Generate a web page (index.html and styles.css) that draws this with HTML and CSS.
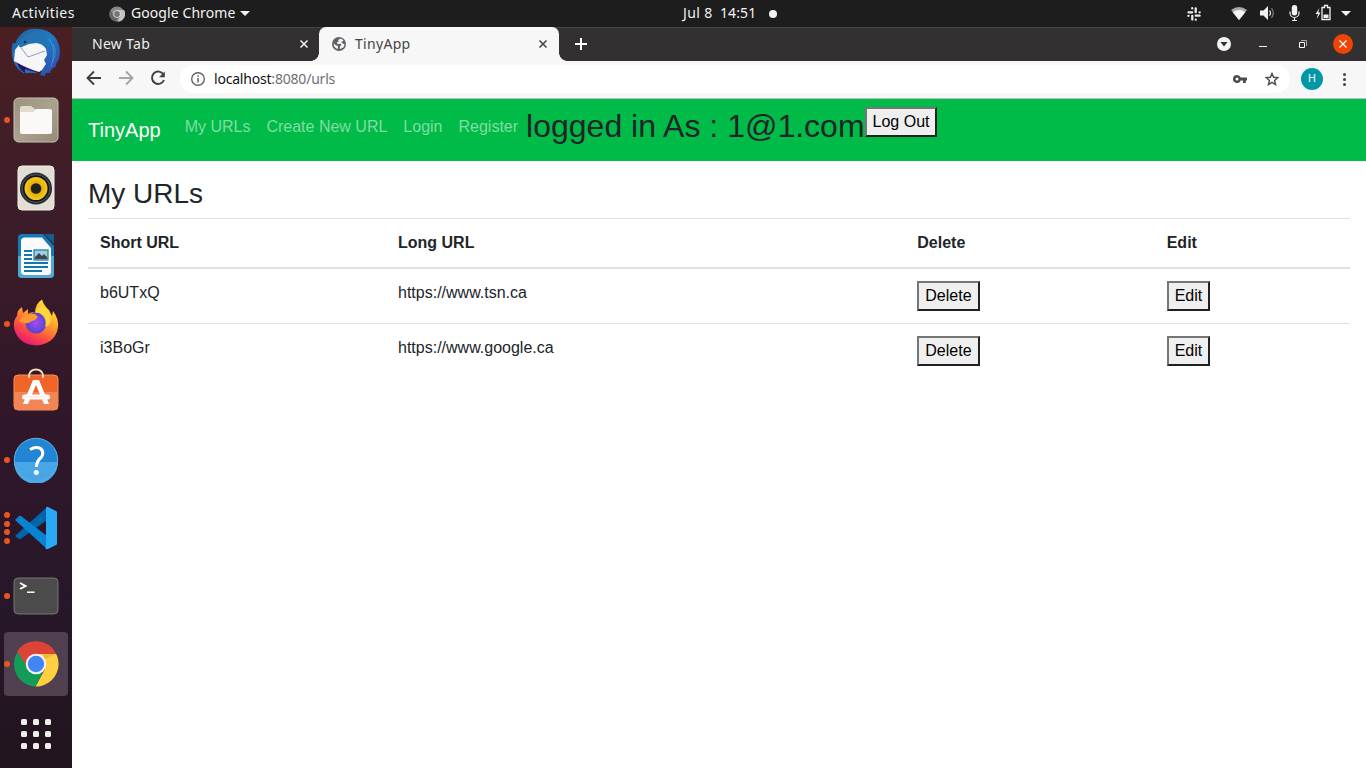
FILE: index.html
```html
<!DOCTYPE html>
<html lang="en">
<head>
<meta charset="utf-8">
<title>TinyApp</title>
<link rel="stylesheet" href="styles.css">
</head>
<body>
<div class="desktop">
  <header class="topbar">
    <div class="top-left">
      <span class="activities">Activities</span>
      <svg class="app-glyph" width="16" height="16" viewBox="0 0 16 16"><circle cx="8" cy="8" r="7.6" fill="#8a8a8a"/><path d="M8 4h7A7.6 7.6 0 0 1 8.500 15.600L11.500 10z" fill="#c4c4c4"/><path d="M1.500 4A7.600 7.600 0 0 0 7 15.500L9 11 5 10z" fill="#666"/><circle cx="8" cy="8" r="3.8" fill="#ddd"/><circle cx="8" cy="8" r="2.900" fill="#777"/></svg>
      <span class="app-name">Google Chrome</span>
      <i class="caret"></i>
    </div>
    <div class="clock"><span class="date">Jul 8</span><span class="time">14:51</span><i class="dot"></i></div>
    <svg class="slack" width="14" height="14" viewBox="0 0 14 14"><path d="M5.200 1.200v.2M8.700 1.400v3.800M12.600 5.300h.1M8.800 8.700h3.800M8.800 12.600v.1M5.300 8.800v3.800M1.400 8.800h.1M1.500 5.300h3.700" stroke="#eaeaea" stroke-width="2.300" stroke-linecap="round" fill="none"/></svg>
    <svg class="tray" width="170" height="27" viewBox="1190 0 170 27">
      <path d="M1231 10Q1239 4 1247 10L1239 20z" fill="#aaa"/><path d="M1232.800 12.200Q1239 8 1245.200 12.200L1239 20z" fill="#f5f5f5"/>
      <path d="M1260 10.500h3.500l4.500-4.500v14l-4.500-4.500h-3.500z" fill="#f2f2f2"/><path d="M1269.500 10.500q2 2.500 0 5" fill="none" stroke="#ddd" stroke-width="1.300"/><path d="M1271.500 8q3.500 5 0 10" fill="none" stroke="#777" stroke-width="1.300"/>
      <rect x="1291.800" y="5" width="5.400" height="10.500" rx="2.700" fill="#f2f2f2"/><path d="M1290 11.500v1.500a4.500 4.500 0 0 0 9 0v-1.500M1294.500 17.500v3M1292 20.500h5" fill="none" stroke="#eee" stroke-width="1.200"/>
      <path d="M1319.500 8l-4 6h2.500l-1.200 5 3.700-6.500h-2.300z" fill="#f2f2f2"/><path d="M1322 7.500h2.500v-2h3v2h2.500v12h-8z" fill="none" stroke="#f2f2f2" stroke-width="1.300"/><path d="M1323.500 14.500h5v3.500h-5z" fill="#f2f2f2"/>
      <path d="M1341 11h10l-5 5z" fill="#f2f2f2"/>
    </svg>
  </header>

  <div class="workspace">
    <nav class="dock">
      <div class="app"><svg width="50" height="50" viewBox="0 0 50 50"><defs><linearGradient id="tb" x1="0" y1="0" x2="1" y2="1"><stop offset="0" stop-color="#205f9e"/><stop offset=".5" stop-color="#1d7cc4"/><stop offset="1" stop-color="#363fa6"/></linearGradient></defs><path d="M2 15L4 17Q8 5 19 2Q36 0 44 10Q51 20 48 32L45 37 45 39 40 43 39 46 35 46 34 49 29 48 31 43 25 46 12 46Q2 39 1 28Q0 21 2 15z" fill="url(#tb)"/><path d="M5 33Q7 42 14 46L14 42 28 46 35 38z" fill="#24165f"/><path d="M3 34L4 23 8 18 26 16Q32 17 35 22L36 28 33 33 35 37 31 43 28 45Q17 42 3 34z" fill="#f6f6f8"/><path d="M8 18l9 12 17-6" fill="none" stroke="#9a9da5" stroke-width="1"/><path d="M8 20Q12 5 26 4Q37 6 37 23Q31 14 20 16L11 20z" fill="#2573b2"/><path d="M38 12q8 10 2 28M42 17q5 8-1 19" stroke="#58b3e5" stroke-width="1" fill="none" opacity=".5"/><circle cx="14" cy="15" r="1.300" fill="#182437"/></svg></div>
      <div class="app run1"><svg width="46" height="46" viewBox="0 0 46 46"><defs><linearGradient id="fi" x1="0" y1="0" x2="1" y2="1"><stop offset="0" stop-color="#9b937f"/><stop offset=".5" stop-color="#aaa28f"/><stop offset="1" stop-color="#938b78"/></linearGradient></defs><rect x="1" y="1" width="44" height="44" rx="4.500" fill="url(#fi)" stroke="#c7c1b2"/><path d="M7 11q0-2 2-2h9l4 3v9H7z" fill="#dfdbcf"/><path d="M7 15h13l3-3h14q2 0 2 2v21q0 2-2 2H9q-2 0-2-2z" fill="#faf9f7"/></svg></div>
      <div class="app"><svg width="38" height="46" viewBox="0 0 38 46"><defs><radialGradient id="sp"><stop offset=".3" stop-color="#dca700"/><stop offset="1" stop-color="#f5c71e"/></radialGradient></defs><rect x="1" y="1" width="36" height="44" rx="4" fill="#e3ded3" stroke="#f4f0e6"/><circle cx="19" cy="23.500" r="16" fill="#2c2f35"/><circle cx="19" cy="23.500" r="13.800" fill="#10131a" stroke="#626874" stroke-width=".7"/><circle cx="19" cy="23.500" r="11.500" fill="url(#sp)"/><circle cx="19" cy="23.500" r="5.300" fill="#222"/></svg></div>
      <div class="app"><svg width="38" height="46" viewBox="0 0 38 46"><path d="M5 1h21l11 12v28q0 4-4 4H5q-4 0-4-4V5q0-4 4-4z" fill="#167bb4"/><path d="M1 23h36v18q0 4-4 4H5q-4 0-4-4z" fill="#50a8d4"/><path d="M8 4.500h17L34 15v24q0 3-3 3H8q-4 0-4-4V8q0-3.500 4-3.500z" fill="#fafafa"/><path d="M27 1h10v10z" fill="#0d5e91"/><path d="M7 18h8M7 22h8M7 26h8M7 30h24M7 34h24M7 38h18" stroke="#1475ae" stroke-width="1.900"/><rect x="17" y="17" width="14" height="10" fill="#9bd1ec" stroke="#1475ae" stroke-width="1.200"/><path d="M18 26v-2l4-4 3 3 2-2 3 3v2z" fill="#444"/><path d="M27 18h3v3z" fill="#efc52a"/></svg></div>
      <div class="app run1 firefox"><svg width="46" height="47" viewBox="0 0 46 47"><defs><linearGradient id="ff" x1=".8" y1="0" x2=".25" y2="1"><stop offset="0" stop-color="#fff044"/><stop offset=".35" stop-color="#ffad2b"/><stop offset=".7" stop-color="#ff4f3e"/><stop offset="1" stop-color="#e20f80"/></linearGradient><radialGradient id="fg"><stop offset="0" stop-color="#a84bf4"/><stop offset="1" stop-color="#5146cb"/></radialGradient></defs><path d="M4 17Q4 11 9 8l1 6 5-4 0 5Q19 12 22 14Q22 5 29 .5Q31 7 36 11L39 17 40 12Q46 20 45 28Q43 44 24 46.500Q5 46 1 29Q0 21 4 17z" fill="url(#ff)"/><circle cx="23" cy="24" r="10.500" fill="url(#fg)"/><path d="M6 22Q11 14 22 15L25 18Q23 21 19 22Q15 25 11 24z" fill="#ff982e"/><path d="M22 14Q26 12 30 17Q34 22 32 28Q38 26 38 19Q36 12 29 7Q24 9 22 14z" fill="#ffd93b" opacity=".85"/></svg></div>
      <div class="app store"><svg width="46" height="44" viewBox="0 0 46 44"><rect x="1" y="8" width="44" height="35" rx="4" fill="#ef6528" stroke="#fa9158"/><path d="M1 25h44v14q0 4-4 4H5q-4 0-4-4z" fill="#f28555"/><path d="M16 11V8a7.200 7.200 0 0 1 14 0v3" fill="none" stroke="#f6dfbd" stroke-width="1.800"/><path d="M20 13h6l10 24h-5l-8-19-8 19h-5z" fill="#fff"/><rect x="9" y="27.500" width="28" height="5" rx="2.500" fill="#fff"/><path d="M13 30h20" stroke="#f3d2c5" stroke-width=".7"/></svg></div>
      <div class="app run1 help"><svg width="46" height="46" viewBox="0 0 46 46"><circle cx="23" cy="23" r="22" fill="#2286d4"/><path d="M1 25a22 22 0 0 0 44 0z" fill="#48a6e6"/><circle cx="23" cy="23" r="21.700" fill="none" stroke="#5dafe6"/><path d="M17 12.500Q23 9 27.500 11.500Q31.500 15 28.500 20Q23.500 24 23.500 30" fill="none" stroke="#fff" stroke-width="3"/><circle cx="23.300" cy="35.500" r="2.500" fill="#fff"/></svg></div>
      <div class="app run4"><svg width="44" height="44" viewBox="0 0 44 44"><path d="M1 30l4 3q1 .5 2-.2L33 14V1z" fill="#0065a9"/><path d="M1 14l4-4q1-.6 2 0l26 20v13z" fill="#0983d1"/><path d="M32 1.500q1-1 2-.5l8 4q1 .5 1 1.500v31q0 1-1 1.500l-8 4q-2 .5-3-1l1-1z" fill="#29a8f4"/></svg></div>
      <div class="app run1"><svg width="46" height="38" viewBox="0 0 46 38"><rect x="1" y="1" width="44" height="36" rx="4" fill="#4b4b4b" stroke="#747474"/><path d="M7 6l5.500 3-5.500 3" fill="none" stroke="#fff" stroke-width="1.900"/><path d="M14 15.200h7.500" stroke="#fff" stroke-width="1.500"/></svg></div>
      <div class="app run1 current"><svg width="46" height="46" viewBox="0 0 46 46"><path d="M23 23H12L4 10.500A22.500 22.500 0 0 1 43.200 13L35 18z" fill="#dc4437"/><path d="M23 13h20.200A22.500 22.500 0 0 1 22.500 45.500L32 28z" fill="#ffce41"/><path d="M4.500 11A22.500 22.500 0 0 0 22.500 45.500L30 31 23 30 13 24z" fill="#119d58"/><path d="M32 18l-2-5h13.200z" fill="#c69a20" opacity=".35"/><circle cx="23" cy="23" r="10.300" fill="#f3f3f3"/><circle cx="23" cy="23" r="8.200" fill="#4285f4"/></svg></div>
      <div class="grid"><i></i><i></i><i></i><i></i><i></i><i></i><i></i><i></i><i></i></div>
    </nav>

    <section class="browser">
      <div class="tabs">
        <div class="tab back"><span>New Tab</span><svg width="10" height="10" viewBox="0 0 10 10"><path d="M1.500 1.500l7 7m0-7l-7 7" stroke="#eee" stroke-width="1.600"/></svg></div>
        <div class="tab active"><svg width="14" height="14" viewBox="0 0 14 14"><circle cx="7" cy="7" r="7" fill="#5f6368"/><path d="M8.500 1.500L6.200 3l.6 1.500-1.800.8.400 1.700 3.100-.2 1 1.300-1.500 1.200-.2 2.700q4.500-.8 4.700-4.700l-1.800-.8L9.200 5l2.300-1.300Q10.500 2 8.500 1.500zM1.700 6.500l2.600 2 1.700.500-.3 2.900Q1.800 11 1.700 6.500z" fill="#f7f7f7"/></svg><span>TinyApp</span><svg width="10" height="10" viewBox="0 0 10 10"><path d="M1.500 1.500l7 7m0-7l-7 7" stroke="#454545" stroke-width="1.600"/></svg></div>
        <svg class="plus" width="12" height="12" viewBox="0 0 12 12"><path d="M6 0v12M0 6h12" stroke="#fff" stroke-width="2"/></svg>
        <svg class="controls" width="150" height="34" viewBox="1210 27 150 34"><circle cx="1224" cy="44" r="7" fill="#f4f4f4"/><path d="M1220.500 42h7l-3.500 4.500z" fill="#323031"/><path d="M1259 46.500h8" stroke="#f4f4f4"/><path d="M1299.500 42.500h5v5h-5z" fill="none" stroke="#fff"/><path d="M1301 40.500h5.500v5.500" fill="none" stroke="#aaa"/><circle cx="1343" cy="44" r="10" fill="#ee4507"/><path d="M1339.500 40.500l7 7m0-7l-7 7" stroke="#fff" stroke-width="1.300"/></svg>
      </div>
      <div class="toolbar">
        <svg class="navs" width="86" height="20" viewBox="84 70 86 20" fill="none" stroke="#3c4043" stroke-width="1.900"><path d="M101 79H88M94 72.500L87.500 79l6.500 6.500"/><path d="M119 79h13M126 72.500l6.500 6.500-6.500 6.500" stroke="#a5a5a5"/><path d="M163.500 75.500a6.200 6.200 0 1 0 .5 5.500"/><path d="M164.800 72.500v5.800h-5.800z" fill="#3c4043" stroke="none"/></svg>
        <div class="address">
          <svg width="14" height="14" viewBox="0 0 14 14"><circle cx="7" cy="7" r="6.300" fill="none" stroke="#5f6368" stroke-width="1.400"/><path d="M7 6v4.500M7 3.200v1.500" stroke="#5f6368" stroke-width="1.500"/></svg>
          <span class="url">localhost<em>:8080/urls</em></span>
          <svg class="key" width="14" height="8" viewBox="0 0 14 8"><path fill-rule="evenodd" d="M4 0a4 4 0 0 1 3.700 2.600H14v2.800h-1.200V8H10V5.400H7.700A4 4 0 1 1 4 0zM4 2.500a1.500 1.500 0 1 0 0 3 1.500 1.500 0 0 0 0-3z" fill="#4b4b4b"/></svg>
          <svg width="14" height="14" viewBox="0 0 14 14"><path d="M7 1.400l1.600 3.900 4.200.4-3.200 2.800 1 4.100L7 10.400l-3.600 2.200 1-4.100L1.200 5.700l4.200-.4z" fill="none" stroke="#4b4b4b" stroke-width="1.400"/></svg>
        </div>
        <span class="avatar">H</span>
        <span class="more"><i></i><i></i><i></i></span>
      </div>
      <div class="page">
        <nav class="navbar">
          <a class="brand">TinyApp</a>
          <div class="nav"><a>My URLs</a><a>Create New URL</a><a>Login</a><a>Register</a><h2>logged in As : 1@1.com</h2><button>Log Out</button></div>
        </nav>
        <main>
          <h3>My URLs</h3>
          <table>
            <colgroup><col class="c1"><col class="c2"><col class="c3"><col></colgroup>
            <thead><tr><th>Short URL</th><th>Long URL</th><th>Delete</th><th>Edit</th></tr></thead>
            <tbody>
              <tr><td>b6UTxQ</td><td>https://www.tsn.ca</td><td><button>Delete</button></td><td><button>Edit</button></td></tr>
              <tr><td>i3BoGr</td><td>https://www.google.ca</td><td><button>Delete</button></td><td><button>Edit</button></td></tr>
            </tbody>
          </table>
        </main>
      </div>
    </section>
  </div>
</div>
</body>
</html>
```
FILE: styles.css
```css
* { box-sizing: border-box; }
body { margin: 0; font-family: "Noto Sans", "Open Sans", sans-serif; }
svg { display: block; flex: none; }
.desktop { width: 1366px; height: 768px; overflow: hidden; display: flex; flex-direction: column; }

.topbar { height: 27px; flex: none; background: #1d1d1d; color: #f2f2f2; display: grid; grid-template-columns: 683px 1fr 14px 159px; align-items: center; font-size: 14px; line-height: 27px; padding-right: 6px; }
.top-left { display: flex; align-items: center; padding-left: 12px; }
.activities { width: 97px; letter-spacing: .45px; }
.app-name { margin: 0 5px 0 6px; width: 104px; white-space: nowrap; letter-spacing: .08px; }
.activities, .app-name, .date, .time { padding-bottom: 1px; line-height: 26px; }
.caret { border: 5px solid transparent; border-top-color: #f2f2f2; border-bottom: 0; }
.clock { display: flex; align-items: center; white-space: nowrap; }
.date { width: 37px; letter-spacing: .4px; }
.time { width: 49px; letter-spacing: .1px; }
.dot { width: 8px; height: 8px; border-radius: 50%; background: #f2f2f2; }
.tray { margin-left: -11px; }

.workspace { flex: 1; display: flex; min-height: 0; }
.dock { width: 72px; flex: none; overflow: hidden; background: linear-gradient(#4a1f22 0, #3d1d29 23%, #301629 55%, #27172a 78%, #21141d 100%); display: flex; flex-direction: column; align-items: center; }
.app { position: relative; width: 64px; height: 64px; flex: none; margin-bottom: 4px; border-radius: 4px; display: flex; align-items: center; justify-content: center; }
.app:first-child { margin-top: -7px; }
.store { padding-bottom: 7px; }
.firefox { padding-bottom: 3px; }
.current { background: #503f4e; }
.run1::before, .run4::before { content: ""; position: absolute; left: 0; top: 29px; width: 6px; height: 6px; border-radius: 50%; background: #e95420; }
.run4::before { top: 16px; box-shadow: 0 9px #e95420, 0 17px #e95420, 0 26px #e95420; }
.grid { display: grid; grid-template-columns: repeat(3, 6px); gap: 6px; margin-top: 19px; }
.grid i { height: 6px; border-radius: 1.5px; background: #f0eeeb; }

.browser { flex: 1; min-width: 0; display: flex; flex-direction: column; background: #fff; }
.tabs { height: 34px; flex: none; background: #323031; display: flex; align-items: center; box-shadow: inset 0 1px #454344; }
.tab { height: 34px; display: flex; align-items: center; font-size: 14px; }
.tab span { flex: 1; padding-bottom: 2px; letter-spacing: .3px; }
.back { width: 247px; padding: 0 10px 0 20px; color: #eee; }
.active { position: relative; width: 240px; padding: 0 11px 0 13px; gap: 9px; background: #f7f7f7; color: #454545; border-radius: 7px 7px 0 0; }
.active::before, .active::after { content: ""; position: absolute; bottom: 0; width: 8px; height: 8px; }
.active::before { left: -8px; background: radial-gradient(circle at 0 0, transparent 7.5px, #f7f7f7 8px); }
.active::after { right: -8px; background: radial-gradient(circle at 100% 0, transparent 7.5px, #f7f7f7 8px); }
.plus { margin-left: 16px; }
.controls { margin-left: auto; margin-right: 6px; }
.toolbar { height: 38px; flex: none; background: #f7f7f7; border-bottom: 1px solid #b9bdb9; display: flex; align-items: center; padding: 0 12px 1px; }
.address { width: 1110px; height: 28px; margin-left: 10px; border-radius: 14px; background: #fff; display: flex; align-items: center; padding: 0 11px; font-size: 14px; }
.url { flex: 1; margin-left: 9px; color: #111; letter-spacing: -.2px; padding-bottom: 1px; }
.url em { color: #6d6f74; font-style: normal; }
.key { margin-right: 18px; }
.avatar { width: 22px; height: 22px; margin-left: 11px; border-radius: 50%; background: #0097a7; color: #fff; font: 11px/22px Roboto, sans-serif; text-align: center; }
.more { display: flex; flex-direction: column; gap: 2px; margin-left: 20px; }
.more i { width: 3px; height: 3px; border-radius: 50%; background: #454545; }

.page { font: 16px/24px "Liberation Sans", Arial, sans-serif; color: #212529; }
.navbar { height: 62px; background: #00bb47; padding: 8px 16px; display: flex; align-items: center; }
.brand { font-size: 20px; line-height: 30px; color: #fff; margin-right: 16px; }
.nav { display: flex; align-items: flex-start; height: 46px; }
.nav a { padding: 8px; color: rgba(255, 255, 255, .5); }
h2 { margin: 0; font-size: 32px; line-height: 38px; font-weight: 400; }
button { height: 30px; font: 16px/24px "Liberation Sans", Arial, sans-serif; color: #000; background: #efefef; border: 2px solid; border-color: #767676 #212121 #212121 #767676; border-radius: 0; padding: 1px 6px; display: block; }
main { padding: 16px; }
h3 { margin: 0 0 7px; font-size: 28px; line-height: 34px; font-weight: 400; }
table { width: 100%; border-collapse: collapse; table-layout: fixed; }
.c1 { width: 298px; }
.c2 { width: 519.3px; }
.c3 { width: 249.4px; }
th, td { padding: 12px; border-top: 1px solid #dee2e6; text-align: left; vertical-align: top; }
thead th { border-bottom: 2px solid #dee2e6; }
```
